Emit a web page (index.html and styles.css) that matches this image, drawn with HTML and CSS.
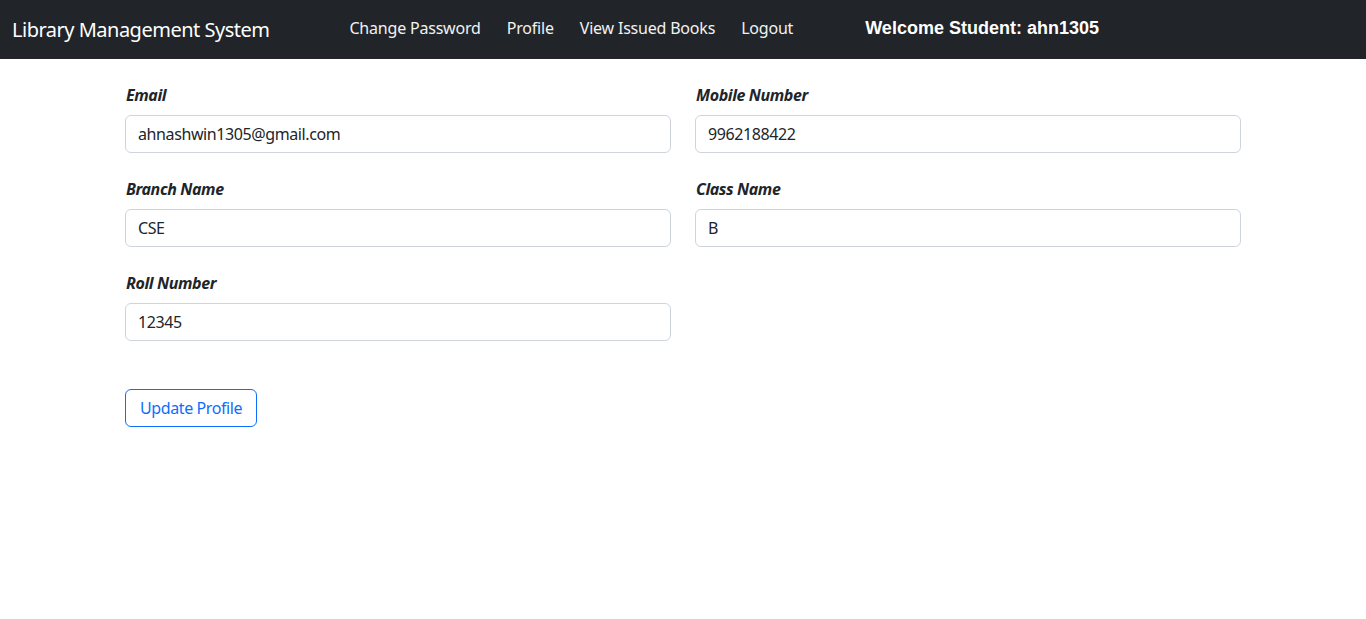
FILE: index.html
```html
<!DOCTYPE html>
<html lang="en">
<head>
<meta charset="utf-8">
<title>Library Management System</title>
<link rel="stylesheet" href="styles.css">
</head>
<body>
<nav class="navbar">
  <a class="brand" href="#">Library Management System</a>
  <ul class="nav">
    <li><a class="nav-link" href="#">Change Password</a></li>
    <li><a class="nav-link" href="#">Profile</a></li>
    <li><a class="nav-link" href="#">View Issued Books</a></li>
    <li><a class="nav-link" href="#">Logout</a></li>
  </ul>
  <span class="welcome">Welcome Student: ahn1305</span>
</nav>
<main class="container">
  <form class="profile-form">
    <div class="grid">
      <div class="field">
        <label class="form-label">Email</label>
        <input class="form-control" type="text" value="ahnashwin1305@gmail.com">
      </div>
      <div class="field">
        <label class="form-label">Mobile Number</label>
        <input class="form-control" type="text" value="9962188422">
      </div>
      <div class="field">
        <label class="form-label">Branch Name</label>
        <input class="form-control" type="text" value="CSE">
      </div>
      <div class="field">
        <label class="form-label">Class Name</label>
        <input class="form-control" type="text" value="B">
      </div>
      <div class="field">
        <label class="form-label">Roll Number</label>
        <input class="form-control" type="text" value="12345">
      </div>
    </div>
    <button class="btn-outline" type="button">Update Profile</button>
  </form>
</main>
</body>
</html>
```
FILE: styles.css
```css
* { box-sizing: border-box; }
html, body { margin: 0; padding: 0; }
body {
  font-family: "Noto Sans", "Open Sans", sans-serif;
  font-size: 16px;
  line-height: 1.5;
  letter-spacing: -0.4px;
  color: #212529;
  background: #fff;
}
.navbar {
  display: flex;
  align-items: center;
  height: 59px;
  background: #212529;
  padding: 0 12px;
}
.brand {
  color: #fff;
  font-size: 20px;
  line-height: 30px;
  letter-spacing: -0.5px;
  text-decoration: none;
}
.nav {
  display: flex;
  list-style: none;
  margin: 0 0 3px 80px;
  padding: 0;
  gap: 26px;
}
.nav-link {
  display: block;
  color: #f2f2f2;
  text-decoration: none;
  font-size: 16px;
  line-height: 24px;
  letter-spacing: -0.2px;
}
.welcome {
  margin-left: 72px;
  margin-bottom: 2px;
  color: #fff;
  font-family: "Liberation Sans", Arial, sans-serif;
  font-weight: bold;
  font-size: 18px;
  letter-spacing: 0;
}
.container {
  max-width: 1140px;
  margin: 0 auto;
  padding: 24px 12px 0;
}
.grid {
  display: grid;
  grid-template-columns: 1fr 1fr;
  column-gap: 24px;
  row-gap: 24px;
}
.form-label {
  display: block;
  font-weight: bold;
  font-style: italic;
  margin-bottom: 8px;
  padding-left: 1px;
}
.form-control {
  display: block;
  width: 100%;
  height: 38px;
  padding: 6px 12px;
  font: inherit;
  letter-spacing: inherit;
  color: #212529;
  border: 1px solid #ced4da;
  border-radius: 6px;
  background: #fff;
}
.btn-outline {
  margin-top: 48px;
  height: 38px;
  padding: 6px 14px;
  font: inherit;
  letter-spacing: inherit;
  color: #0d6efd;
  background: transparent;
  border: 1px solid #0d6efd;
  border-radius: 6px;
}
```
